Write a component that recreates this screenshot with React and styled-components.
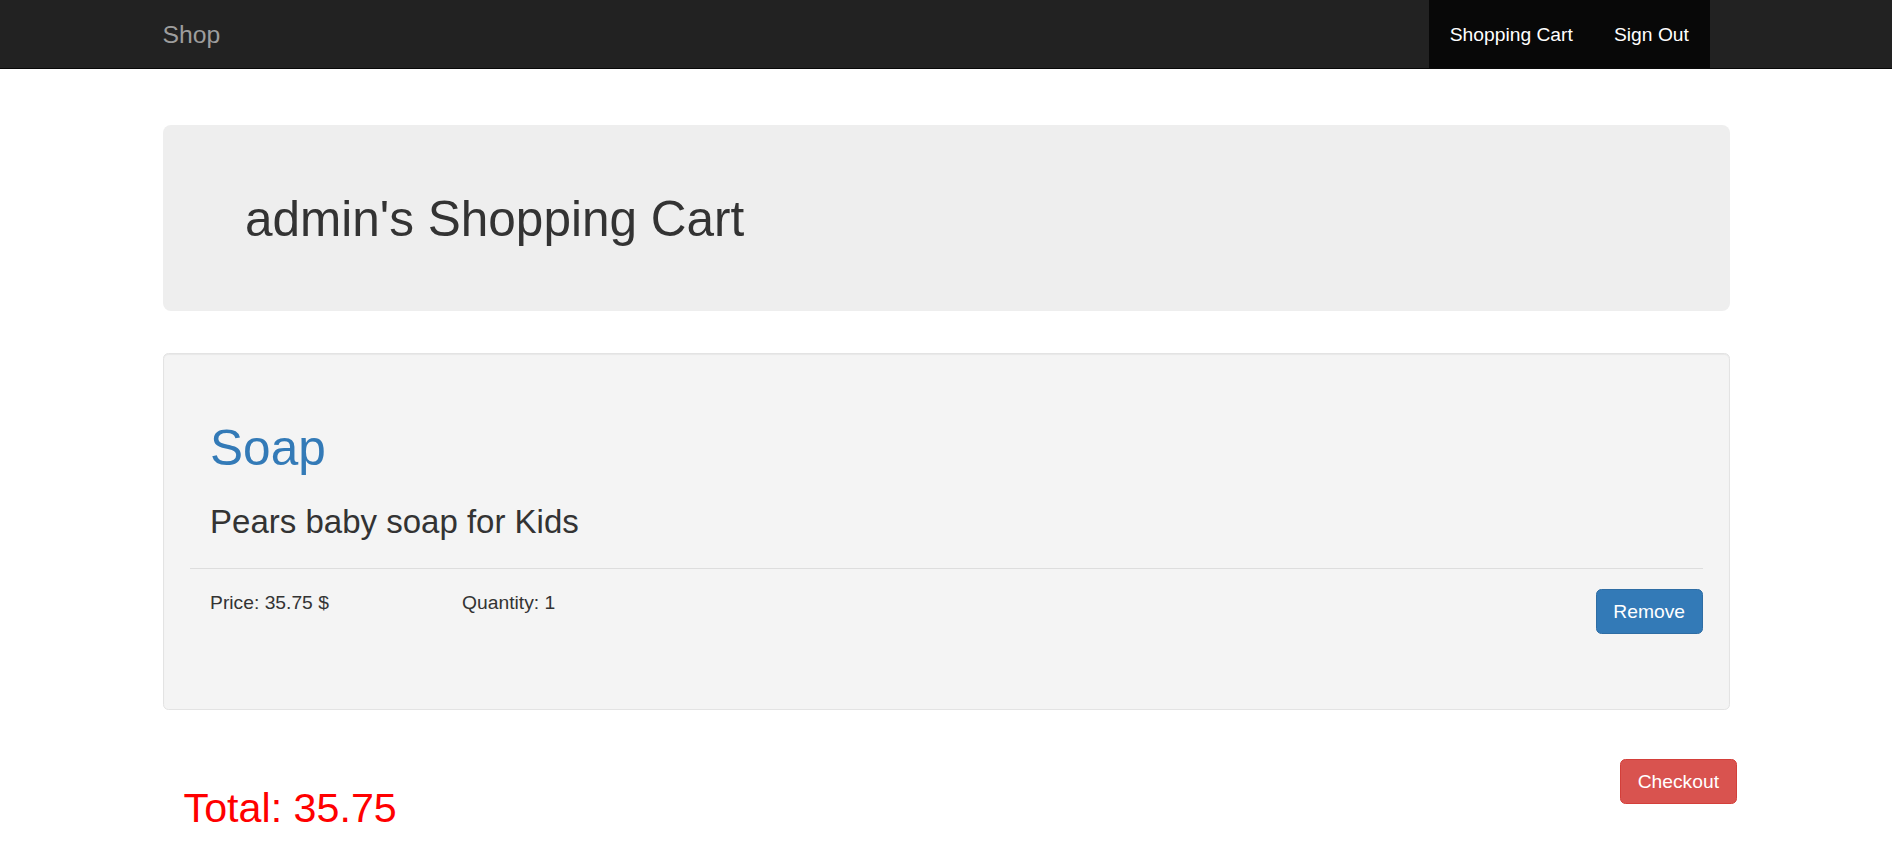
import React from 'react';
import styled, { createGlobalStyle } from 'styled-components';

const GlobalStyle = createGlobalStyle`
  body {
    margin: 0;
    background: #fff;
    color: #333;
    font-family: "Liberation Sans", Arial, Helvetica, sans-serif;
    font-size: 19.25px;
    line-height: 27.5px;
  }
  * { box-sizing: border-box; }
`;

const Navbar = styled.nav`
  background: #222;
  border-bottom: 1px solid #080808;
  height: 69px;
`;

const NavInner = styled.div`
  width: 1567px;
  margin: 0 auto;
  height: 100%;
  display: flex;
  justify-content: space-between;
`;

const Brand = styled.a`
  color: #9d9d9d;
  font-size: 24.75px;
  line-height: 27.5px;
  padding: 20.6px 0;
  text-decoration: none;
`;

const NavLinks = styled.ul`
  display: flex;
  list-style: none;
  margin: 0 20px 0 0;
  padding: 0;
  background: #080808;
`;

const NavLink = styled.a`
  display: block;
  color: #fff;
  font-size: 19.25px;
  line-height: 27.5px;
  padding: 20.6px 20.6px;
  text-decoration: none;
`;

const Container = styled.main`
  width: 1567px;
  margin: 0 auto;
`;

const Jumbotron = styled.div`
  margin-top: 56px;
  background: #eee;
  border-radius: 8px;
  padding: 67px 82.5px 65px;
`;

const PageTitle = styled.h1`
  margin: 0;
  font-size: 49.5px;
  line-height: 53.5px;
  font-weight: 400;
  color: #333;
`;

const Well = styled.div`
  margin-top: 42px;
  background: #f4f4f4;
  border: 1px solid #e3e3e3;
  border-radius: 5.5px;
  padding: 26px;
  box-shadow: inset 0 1px 1px rgba(0, 0, 0, 0.05);
`;

const ItemName = styled.h1`
  margin: 41px 0 0;
  padding-left: 20.6px;
  font-size: 49.5px;
  line-height: 54px;
  font-weight: 400;
  color: #337ab7;
`;

const ItemDesc = styled.h3`
  margin: 29px 0 0;
  padding-left: 20.6px;
  font-size: 33px;
  line-height: 36.3px;
  font-weight: 400;
  color: #333;
`;

const Divider = styled.hr`
  margin: 28px 0 0;
  border: 0;
  border-top: 1px solid #ddd;
`;

const ItemRow = styled.div`
  display: flex;
  align-items: flex-start;
  margin: 20.6px 0 48.5px;
`;

const Col = styled.div`
  width: 252px;
  padding-left: 20.6px;
`;

const Button = styled.button`
  font-family: inherit;
  font-size: 19.25px;
  line-height: 27px;
  padding: 8px 16.5px;
  border-radius: 5.5px;
  border: 1px solid ${p => (p.$variant === 'danger' ? '#d43f3a' : '#2e6da4')};
  background: ${p => (p.$variant === 'danger' ? '#d9534f' : '#337ab7')};
  color: #fff;
  cursor: pointer;
  margin-left: auto;
`;

const Footer = styled.div`
  display: flex;
  justify-content: space-between;
  align-items: flex-start;
  margin: 49px -7px 0 0;
`;

const Total = styled.h2`
  margin: 27px 0 0;
  padding-left: 21px;
  font-size: 41.25px;
  line-height: 45.4px;
  font-weight: 400;
  color: red;
`;

const cart = [
  { name: 'Soap', description: 'Pears baby soap for Kids', price: 35.75, quantity: 1 },
];

export default function App() {
  const total = cart.reduce((sum, item) => sum + item.price * item.quantity, 0);

  return (
    <>
      <GlobalStyle />
      <Navbar>
        <NavInner>
          <Brand href="#">Shop</Brand>
          <NavLinks>
            <li><NavLink href="#">Shopping Cart</NavLink></li>
            <li><NavLink href="#">Sign Out</NavLink></li>
          </NavLinks>
        </NavInner>
      </Navbar>

      <Container>
        <Jumbotron>
          <PageTitle>admin's Shopping Cart</PageTitle>
        </Jumbotron>

        {cart.map(item => (
          <Well key={item.name}>
            <ItemName>{item.name}</ItemName>
            <ItemDesc>{item.description}</ItemDesc>
            <Divider />
            <ItemRow>
              <Col>Price: {item.price} $</Col>
              <Col>Quantity: {item.quantity}</Col>
              <Button>Remove</Button>
            </ItemRow>
          </Well>
        ))}

        <Footer>
          <Total>Total: {total}</Total>
          <Button $variant="danger">Checkout</Button>
        </Footer>
      </Container>
    </>
  );
}
